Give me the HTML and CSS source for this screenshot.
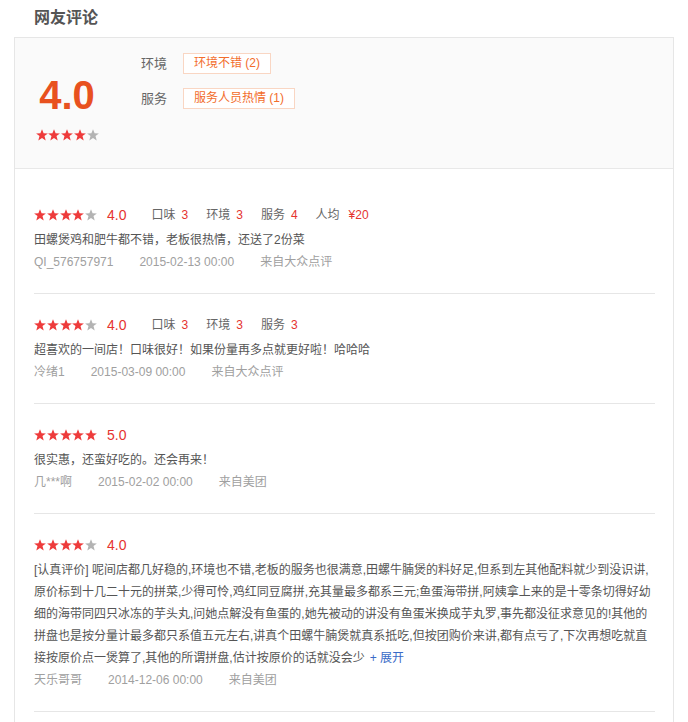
FILE: index.html
```html
<!DOCTYPE html>
<html lang="zh-CN">
<head>
<meta charset="utf-8">
<title>网友评论</title>
<link rel="stylesheet" href="styles.css">
</head>
<body>
<svg class="defs" width="0" height="0" aria-hidden="true">
  <symbol id="star" viewBox="0 0 12 12">
    <path d="M6 0.2 L7.6 4.2 L11.9 4.4 L8.5 7.1 L9.7 11.6 L6 9.1 L2.3 11.6 L3.5 7.1 L0.1 4.4 L4.4 4.2 Z"/>
  </symbol>
</svg>
<h2 class="title">网友评论</h2>
<div class="box">
  <div class="summary">
    <div class="score-col">
      <div class="big-score">4.0</div>
      <div class="stars">
        <svg class="star on"><use href="#star"/></svg><svg class="star on"><use href="#star"/></svg><svg class="star on"><use href="#star"/></svg><svg class="star on"><use href="#star"/></svg><svg class="star off"><use href="#star"/></svg>
      </div>
    </div>
    <div class="tags-col">
      <div class="tag-row"><span class="tag-label">环境</span><span class="tag">环境不错 (2)</span></div>
      <div class="tag-row"><span class="tag-label">服务</span><span class="tag">服务人员热情 (1)</span></div>
    </div>
  </div>
  <div class="list">
    <div class="review">
      <div class="rhead">
        <div class="stars"><svg class="star on"><use href="#star"/></svg><svg class="star on"><use href="#star"/></svg><svg class="star on"><use href="#star"/></svg><svg class="star on"><use href="#star"/></svg><svg class="star off"><use href="#star"/></svg></div>
        <span class="rscore">4.0</span>
        <span class="item">口味<em>3</em></span>
        <span class="item">环境<em>3</em></span>
        <span class="item">服务<em>4</em></span>
        <span class="item">人均<em class="price">¥20</em></span>
      </div>
      <p class="rtext">田螺煲鸡和肥牛都不错，老板很热情，还送了2份菜</p>
      <div class="meta"><span>QI_576757971</span><span>2015-02-13 00:00</span><span>来自大众点评</span></div>
    </div>
    <div class="review">
      <div class="rhead">
        <div class="stars"><svg class="star on"><use href="#star"/></svg><svg class="star on"><use href="#star"/></svg><svg class="star on"><use href="#star"/></svg><svg class="star on"><use href="#star"/></svg><svg class="star off"><use href="#star"/></svg></div>
        <span class="rscore">4.0</span>
        <span class="item">口味<em>3</em></span>
        <span class="item">环境<em>3</em></span>
        <span class="item">服务<em>3</em></span>
      </div>
      <p class="rtext">超喜欢的一间店！口味很好！如果份量再多点就更好啦！哈哈哈</p>
      <div class="meta"><span>冷绪1</span><span>2015-03-09 00:00</span><span>来自大众点评</span></div>
    </div>
    <div class="review">
      <div class="rhead">
        <div class="stars"><svg class="star on"><use href="#star"/></svg><svg class="star on"><use href="#star"/></svg><svg class="star on"><use href="#star"/></svg><svg class="star on"><use href="#star"/></svg><svg class="star on"><use href="#star"/></svg></div>
        <span class="rscore">5.0</span>
      </div>
      <p class="rtext">很实惠，还蛮好吃的。还会再来！</p>
      <div class="meta"><span>几***啊</span><span>2015-02-02 00:00</span><span>来自美团</span></div>
    </div>
    <div class="review">
      <div class="rhead">
        <div class="stars"><svg class="star on"><use href="#star"/></svg><svg class="star on"><use href="#star"/></svg><svg class="star on"><use href="#star"/></svg><svg class="star on"><use href="#star"/></svg><svg class="star off"><use href="#star"/></svg></div>
        <span class="rscore">4.0</span>
      </div>
      <p class="rtext"><span>[认真评价] 呢间店都几好稳的,环境也不错,老板的服务也很满意,田螺牛腩煲的料好足,但系到左其他配料就少到没识讲,原价标到十几二十元的拼菜,少得可怜,鸡红同豆腐拼,充其量最多都系三元;鱼蛋海带拼,阿姨拿上来的是十零条切得好幼细的海带同四只冰冻的芋头丸,问她点解没有鱼蛋的,她先被动的讲没有鱼蛋米换成芋丸罗,事先都没征求意见的!其他的拼盘也是按分量计最多都只系值五元左右,讲真个田螺牛腩煲就真系抵吃,但按团购价来讲,都有点亏了,下次再想吃就直</span><span>接按原价点一煲算了,其他的所谓拼盘,估计按原价的话就没会少</span><a class="more" href="#">+ 展开</a></p>
      <div class="meta"><span>天乐哥哥</span><span>2014-12-06 00:00</span><span>来自美团</span></div>
    </div>
  </div>
</div>
</body>
</html>
```

FILE: styles.css
```css
* { box-sizing: border-box; }
html, body { margin: 0; padding: 0; background: #fff; }
body {
  font-family: "Liberation Sans", "Noto Sans CJK SC", sans-serif;
  font-size: 12px;
  color: #555;
}
.defs { position: absolute; width: 0; height: 0; overflow: hidden; }

.title {
  margin: 0;
  height: 37px;
  padding-left: 34px;
  font-size: 16px;
  line-height: 36px;
  font-weight: bold;
  color: #555;
}

.box {
  margin: 0 14px;
  border: 1px solid #e6e6e6;
  border-bottom: none;
  padding-bottom: 20px;
}

.summary {
  display: flex;
  height: 131px;
  background: #fafafa;
  border-bottom: 1px solid #e8e8e8;
  padding: 15px 20px 0;
}
.score-col {
  width: 64px;
  margin-right: 42px;
  display: flex;
  flex-direction: column;
  align-items: center;
}
.big-score {
  margin-top: 22px;
  font-size: 40px;
  line-height: 40px;
  font-weight: bold;
  color: #e8511f;
}
.score-col .stars { margin-top: 14px; }

.stars { display: flex; gap: 0.75px; height: 12px; }
.star { width: 12px; height: 12px; display: block; }
.star.on { fill: #ee3b3b; }
.star.off { fill: #b3b3b3; }

.tags-col { display: flex; flex-direction: column; gap: 14px; }
.tag-row { display: flex; align-items: center; height: 21px; }
.tag-label {
  font-size: 13px;
  color: #666;
  width: 42px;
  line-height: 21px;
}
.tag {
  border: 1px solid #f9d6c3;
  background: #fff;
  color: #f26d2b;
  padding: 0 10px;
  line-height: 19px;
  font-size: 12px;
}

.list { padding: 15px 18px 0 19px; }
.review {
  padding: 21px 0 20px;
  border-bottom: 1px solid #e6e6e6;
}
.rhead {
  display: flex;
  align-items: center;
  height: 20px;
}
.rscore {
  margin-left: 10px;
  margin-right: 25px;
  font-size: 14px;
  color: #e5332f;
  line-height: 20px;
}
.item {
  color: #666;
  font-size: 12px;
  margin-right: 18px;
  line-height: 20px;
}
.item em {
  font-style: normal;
  color: #e5332f;
  margin-left: 6px;
}
.item em.price { margin-left: 9px; }

.rtext {
  margin: 4px 0 0;
  line-height: 22px;
  color: #555;
}
.more {
  display: inline-block;
  margin-left: 5px;
  color: #3a6bc7;
  text-decoration: none;
}

.meta {
  display: flex;
  line-height: 22px;
  color: #a0a0a0;
}
.meta span { margin-right: 26px; }
```
